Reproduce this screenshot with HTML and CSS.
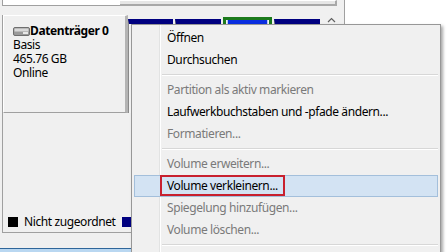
FILE: index.html
```html
<!DOCTYPE html>
<html lang="de">
<head>
  <meta charset="UTF-8">
  <title>Datenträgerverwaltung</title>
  <link rel="stylesheet" href="styles.css">
</head>
<body>

  <div class="screen">
    <div class="window">
      <!-- bottom edge of the volume list -->
      <div class="toppane">
        <div class="listend"></div>
        <div class="hscroll"></div>
      </div>

      <!-- graphical view -->
      <div class="graph">
        <div class="disk">
          <div class="disklabel">
            <div class="diskname">
              <svg class="drive" width="17" height="10" viewBox="0 0 17 10">
                <rect x="0.5" y="1.5" width="16" height="8" rx="1.5" fill="#9a9a9a" stroke="#6f6f6f"/>
                <rect x="1.5" y="2.5" width="14" height="3" fill="#d9d9d9"/>
                <rect x="10" y="6" width="5" height="2" fill="#e8e8e8"/>
              </svg>
              <b>Datenträger 0</b>
            </div>
            <div>Basis</div>
            <div>465.76 GB</div>
            <div>Online</div>
          </div>
          <div class="partitions">
            <div class="part p1"></div>
            <div class="part p2"></div>
            <div class="part selected"><div class="fill"></div></div>
            <div class="part p4"></div>
          </div>
          <div class="vscroll">
            <svg width="9" height="6" viewBox="0 0 9 6">
              <path d="M1 5 L4.5 1.5 L8 5" fill="none" stroke="#606060" stroke-width="1.2"/>
            </svg>
          </div>
        </div>

        <div class="legend">
          <span class="swatch black"></span>Nicht zugeordnet
          <span class="swatch navy"></span>Primäre Partition
        </div>
      </div>

      <div class="taskbar"></div>
    </div>

    <!-- context menu -->
    <div class="menu">
      <div class="item">Öffnen</div>
      <div class="item">Durchsuchen</div>
      <div class="sep"></div>
      <div class="item disabled">Partition als aktiv markieren</div>
      <div class="item">Laufwerkbuchstaben und -pfade ändern...</div>
      <div class="item disabled">Formatieren...</div>
      <div class="sep"></div>
      <div class="item disabled">Volume erweitern...</div>
      <div class="item hover"><span class="mark">Volume verkleinern...</span></div>
      <div class="item disabled">Spiegelung hinzufügen...</div>
      <div class="item disabled">Volume löschen...</div>
      <div class="sep"></div>
    </div>
  </div>

</body>
</html>
```

FILE: styles.css
```css
* {
  box-sizing: border-box;
  margin: 0;
  padding: 0;
}
body {
  font-family: "Noto Sans", "Open Sans", sans-serif;
  font-size: 12px;
  letter-spacing: -0.4px;
  color: #000;
  background-color: #fff;
}
.screen {
  position: relative;
  width: 448px;
  height: 252px;
  overflow: hidden;
  display: flex;
}
.window {
  width: 345px;
  height: 252px;
  background-color: #f0f0f0;
  border-right: 1px solid #a0a0a0;
  display: flex;
  flex-direction: column;
}
.toppane {
  display: flex;
  height: 6px;
}
.listend {
  width: 118px;
  margin-left: 2px;
  background-color: #fff;
  border-left: 1px solid #a0a0a0;
  border-bottom: 1px solid #a0a0a0;
}
.hscroll {
  width: 217px;
  height: 6px;
  border-top: 1px solid #fff;
  border-bottom: 2px solid #a8a8a8;
  border-right: 2px solid #a8a8a8;
  background-color: #e6e6e6;
}

/* graphical view */
.graph {
  height: 218px;
  margin: 9px 0 0 2px;
  border-left: 1px solid #a0a0a0;
  border-bottom: 1px solid #a0a0a0;
  display: flex;
  flex-direction: column;
}
.disk {
  display: flex;
  height: 98px;
}
.disklabel {
  width: 125px;
  padding: 8px 0 0 9px;
  line-height: 14px;
  border: 1px solid #fff;
  border-right: 3px solid #b4b4b4;
  border-bottom: 1px solid #a0a0a0;
}
.diskname {
  display: flex;
  align-items: center;
}
.partitions {
  display: flex;
  gap: 2px;
  padding-top: 4px;
}
.part {
  height: 94px;
  border-top: 5px solid #000080;
  border-left: 1px solid #8a8a8a;
  background-color: #f4f4f4;
}
.p1 { width: 45px; }
.p2 { width: 46px; }
.p4 { width: 46px; }
.part.selected {
  width: 49px;
  margin-top: -2px;
  border: 3px solid #1c7a1c;
  padding: 0 1px;
}
.fill {
  height: 6px;
  background-color: #0a2ee0;
  border: 1px solid #b8c8f0;
  border-top: none;
}
.vscroll {
  width: 15px;
  margin-left: 4px;
  padding-top: 2px;
  display: flex;
  justify-content: center;
}
.legend {
  margin-top: auto;
  padding: 0 0 3px 5px;
  display: flex;
  align-items: center;
  height: 18px;
  white-space: nowrap;
}
.swatch {
  width: 10px;
  height: 10px;
  margin-right: 6px;
}
.swatch.black {
  background-color: #000;
}
.swatch.navy {
  background-color: #000080;
  margin-left: 6px;
}
.taskbar {
  margin-top: auto;
  height: 4px;
  border-top: 1px solid #2f669a;
  background-color: #b9d7f1;
}

/* context menu */
.menu {
  position: absolute;
  left: 131px;
  top: 24px;
  width: 310px;
  height: 250px;
  padding: 2px;
  border: 1px solid #979797;
  background: linear-gradient(to right, transparent 27px, #e2e3e3 27px, #e2e3e3 28px, #fff 28px, #fff 29px, transparent 29px), #f0f0f0;
  box-shadow: 2px 2px 3px rgba(0, 0, 0, 0.35);
}
.item {
  height: 22px;
  line-height: 20px;
  padding-left: 32px;
  border: 1px solid transparent;
  white-space: nowrap;
}
.item.disabled {
  color: #7a7a7a;
}
.item.hover {
  background-color: #d3e3f3;
  border-color: #a3bfdb;
}
.mark {
  display: inline-block;
  height: 21px;
  margin: -1px 0 0 -7px;
  padding: 0 5px;
  line-height: 17px;
  border: 2px solid #c8202e;
  vertical-align: top;
}
.sep {
  margin: 3px 0 3px 28px;
  border-top: 1px solid #d7d7d7;
  border-bottom: 1px solid #fff;
}
```
